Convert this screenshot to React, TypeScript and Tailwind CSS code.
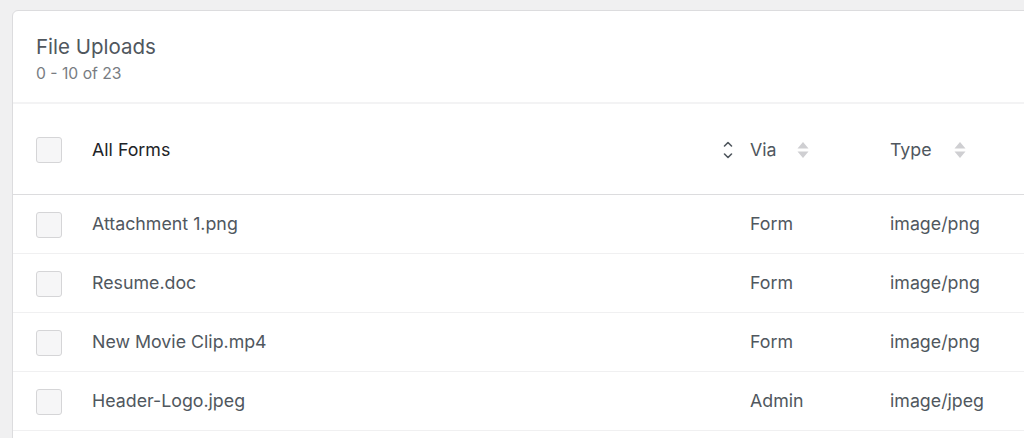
import React from 'react';

const files = [
  { name: 'Attachment 1.png', via: 'Form', type: 'image/png' },
  { name: 'Resume.doc', via: 'Form', type: 'image/png' },
  { name: 'New Movie Clip.mp4', via: 'Form', type: 'image/png' },
  { name: 'Header-Logo.jpeg', via: 'Admin', type: 'image/jpeg' },
];

const Checkbox: React.FC = () => (
  <span className="block w-[26px] h-[26px] rounded-[3px] border border-[#d5d5d7] bg-[#f6f6f7]"></span>
);

const Triangles: React.FC = () => (
  <svg width="12" height="18" viewBox="0 0 12 18" className="text-[#cfcfd2]">
    <path d="M6 1 L11.5 7.5 H0.5 Z" fill="currentColor" />
    <path d="M6 17 L11.5 10.5 H0.5 Z" fill="currentColor" />
  </svg>
);

const App: React.FC = () => {
  return (
    <div
      className="w-[1024px] h-[438px] overflow-hidden bg-[#f0f0f1] pl-3 pt-[10px]"
      style={{ fontFamily: 'Inter, "Noto Sans", sans-serif' }}
    >
      <div className="w-[1100px] min-h-[460px] bg-white border border-[#dcdcde] rounded-tl-[6px]">
        {/* Title */}
        <div className="h-[93px] pl-[23px] pt-[22px] border-b-2 border-[#f3f3f4]">
          <h1 className="text-[20.5px] leading-[28px] text-[#50575e]">File Uploads</h1>
          <p className="text-[15.7px] leading-[20px] text-[#787c82] mt-[3px]">0 - 10 of 23</p>
        </div>

        {/* Header row */}
        <div className="grid grid-cols-[56px_658px_140px_1fr] items-center h-[91px] pl-[23px] pt-[2px] border-b border-[#dcdcde]">
          <Checkbox />
          <div className="flex items-center justify-between pr-[16px]">
            <span className="text-[17.8px] text-[#1d2327]">All Forms</span>
            <svg width="12" height="20" viewBox="0 0 12 20" fill="none" stroke="#50575e" strokeWidth="1.6" strokeLinecap="round" strokeLinejoin="round">
              <path d="M2.5 6 L6 2.5 L9.5 6" />
              <path d="M2.5 14 L6 17.5 L9.5 14" />
            </svg>
          </div>
          <div className="flex items-center gap-[20px]">
            <span className="text-[17.8px] text-[#50575e]">Via</span>
            <Triangles />
          </div>
          <div className="flex items-center gap-[22px]">
            <span className="text-[17.8px] text-[#50575e]">Type</span>
            <Triangles />
          </div>
        </div>

        {/* Rows */}
        {files.map((f) => (
          <div
            key={f.name}
            className="grid grid-cols-[56px_658px_140px_1fr] items-center h-[59px] pl-[23px] pt-[1px] border-b border-[#f0f0f1]"
          >
            <Checkbox />
            <span className="text-[17.8px] text-[#50575e]">{f.name}</span>
            <span className="text-[17.8px] text-[#50575e]">{f.via}</span>
            <span className="text-[17.8px] text-[#50575e]">{f.type}</span>
          </div>
        ))}
      </div>
    </div>
  );
};

export default App;
